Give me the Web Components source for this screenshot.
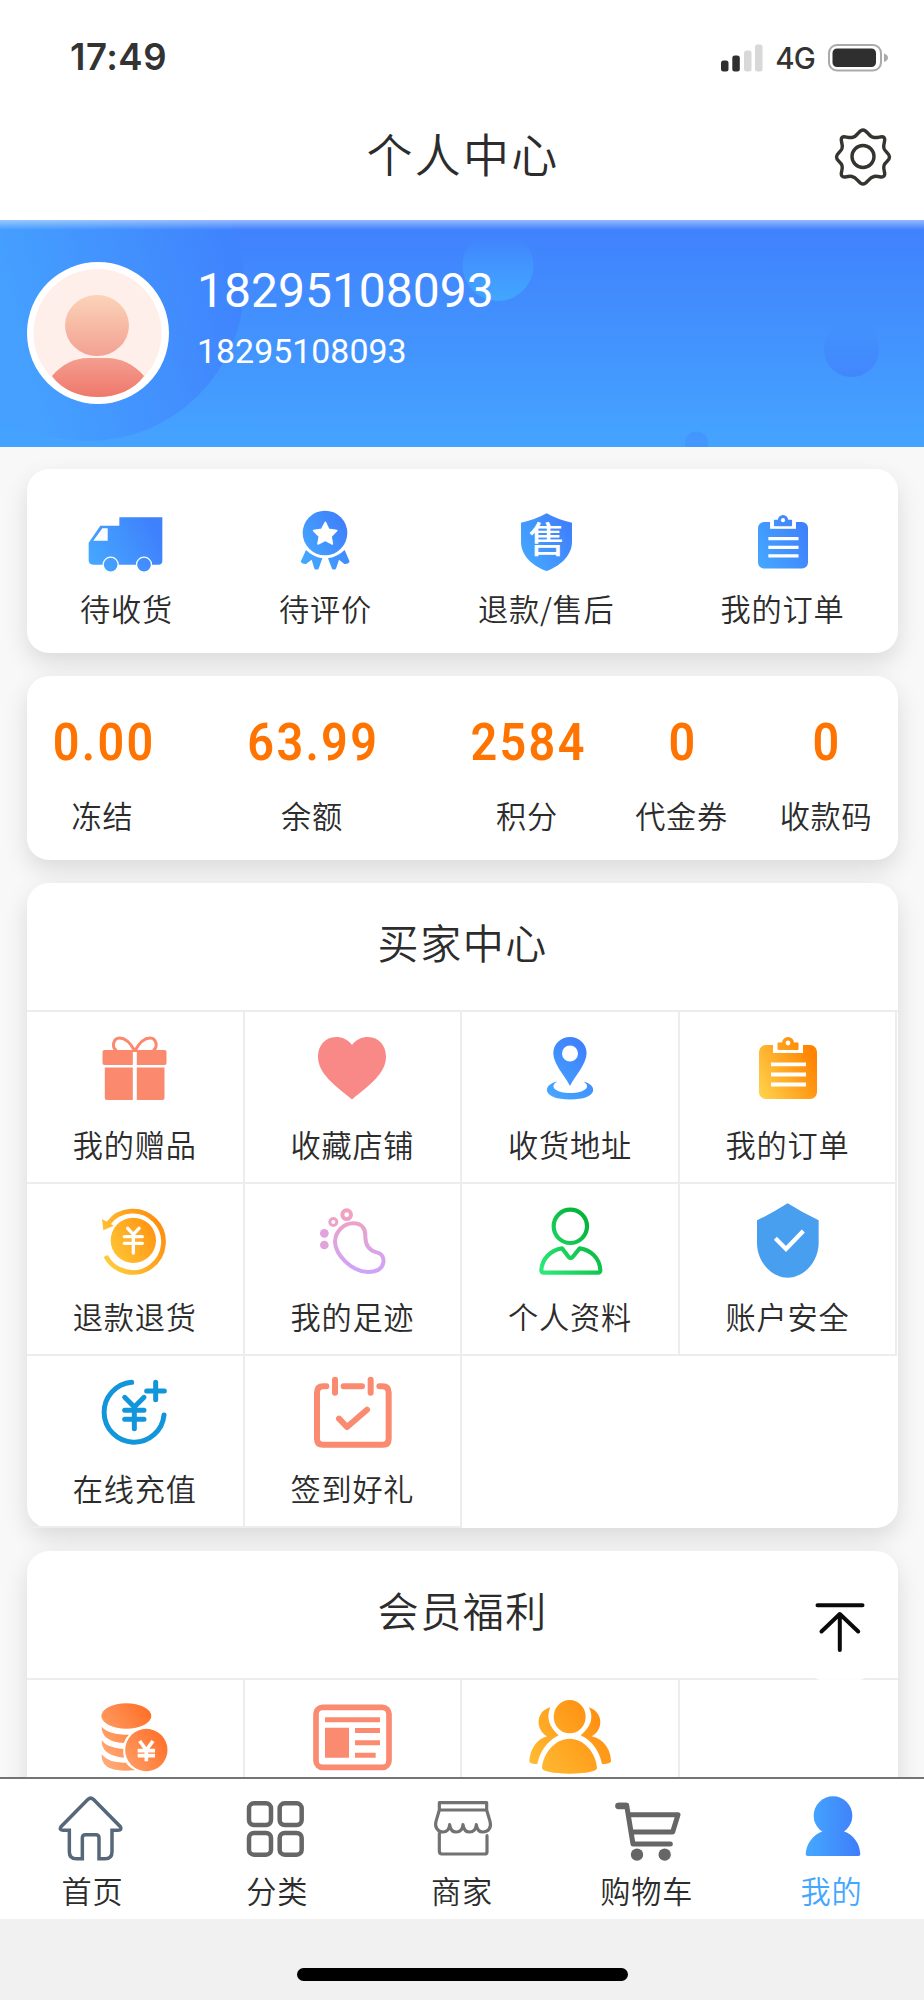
<!DOCTYPE html>
<html lang="zh-CN">
<head>
<meta charset="utf-8">
<title>个人中心</title>
<style>
html,body{margin:0;padding:0}
body{width:924px;height:2000px;overflow:hidden;background:#f8f8f8;color:#2c2c2c;font-family:"Noto Sans CJK SC",sans-serif;font-weight:350}
</style>
</head>
<body>
<profile-page></profile-page>
<script>
const define = (name, css, html) => customElements.define(name, class extends HTMLElement {
  constructor() {
    super();
    this.attachShadow({mode: 'open'});
  }
  connectedCallback() {
    const body = typeof html === 'function' ? html(this) : html;
    this.shadowRoot.innerHTML = `<style>*{box-sizing:border-box}${css}</style>${body}`;
  }
});

const ugrad = (a, b, x1, y1, x2, y2) => `<defs><linearGradient id="g" gradientUnits="userSpaceOnUse" x1="${x1}" y1="${y1}" x2="${x2}" y2="${y2}"><stop offset="0" stop-color="${a}"/><stop offset="1" stop-color="${b}"/></linearGradient></defs>`;
const board = `<g fill="url(#g)"><rect y="8" width="58" height="54" rx="7"/><rect x="14" y="4" width="30" height="12" fill="#fff"/><rect x="18.5" y="5.5" width="21" height="7.5" rx="1"/><circle cx="29" cy="6" r="6"/></g><circle cx="29" cy="6" r="2.4" fill="#fff"/><path d="M12 27.3H47M12 37.5H47M12 47.5H47" stroke="#fff" stroke-width="3.8"/>`;
const BLUE = ['#45a6ff', '#3f80fc'];

// name: [width, height, viewBox, markup]
const ICONS = {
  gear: [62, 62, '832 126 62 62', `<g fill="none" stroke="#35342f" stroke-width="3.400"><path stroke-linejoin="round" d="M863 130C867.500 130 868.500 137 874 137.500C879 138 882 135.500 884 137.500C886.500 140 882.500 143.500 884 148.500C885.500 152.500 889.500 153 889.500 157C889.500 161 885.500 161.500 884 165.500C882.500 170.500 886.500 173.500 884 176C882 178.500 879 175.500 874 176.500C868.500 177.500 867.500 184 863 184C858.500 184 857.500 177.500 852 176.500C847 175.500 844 178.500 842 176C839.500 173.500 843.500 170.500 842 165.500C840.500 161.500 836.500 161 836.500 157C836.500 153 840.500 152.500 842 148.500C843.500 143.500 839.500 140 842 137.500C844 135.500 847 138 852 137.500C857.500 137 858.500 130 863 130Z"/><circle cx="863" cy="156.500" r="11"/></g>`],
  truck: [80, 70, '48 21 240 210', ugrad(...BLUE, 70, 190, 260, 90) + `<path fill="url(#g)" d="M148 52H277V182Q277 194 265 194H70Q56 194 56 180V128L91 77H148Z"/><path fill="#fff" d="M97 85H113V122H70Z"/><g fill="url(#g)" stroke="#fff" stroke-width="4"><circle cx="122" cy="194" r="22.500"/><circle cx="222" cy="194" r="22.500"/></g>`],
  medal: [80, 70, '645 21 240 210', ugrad(...BLUE, 700, 160, 830, 80) + `<g fill="url(#g)"><circle cx="765" cy="99" r="67"/><path d="M708 150L692 185Q697 193 708 192L725 179L733 206Q740 211 746 206L757 175Q728 170 708 150ZM824 150L839 185Q834 193 823 192L807 179L798 206Q791 211 786 206L774 175Q803 170 824 150Z"/></g><path fill="#fff" stroke="#fff" stroke-width="5" stroke-linejoin="round" d="M766 67L776 88L800 92L783 109L787 132L766 121L744 132L748 109L731 92L755 88Z"/>`],
  aftersale: [80, 70, '1308 21 240 210', ugrad(...BLUE, 1360, 170, 1500, 80) + `<path fill="url(#g)" d="M1430 40Q1465 60 1506 68V125C1506 170 1465 200 1430 213C1393 200 1353 170 1353 125V68Q1394 60 1430 40Z"/><text x="1431" y="159" text-anchor="middle" fill="#fff" font-size="110" font-weight="500" font-family="Noto Sans CJK SC">售</text>`],
  order: [80, 70, '-17.4 -9.3 92.800 81.200', ugrad(...BLUE, 0, 50, 58, 20) + board],
  orderHot: [90, 80, '-16 -9 90 80', ugrad('#ffce48', '#ff8200', 0, 50, 56, 20) + board],
  gift: [90, 80, '89.5 1028 90 80', `<g fill="#fa896e"><rect x="102" y="1050" width="64" height="15" rx="2"/><path d="M104.300 1067.500H164V1098Q164 1100 162 1100H106.300Q104.300 1100 104.300 1098Z"/></g><path d="M134.300 1052V1100" stroke="#fff" stroke-width="4"/><path d="M134.300 1051C130 1043 124 1038 119 1038C113 1038 110.500 1047 116 1050.500M134.300 1051C138.600 1043 144.600 1038 149.600 1038C155.600 1038 158.100 1047 152.600 1050.500" fill="none" stroke="#fa896e" stroke-width="3"/>`],
  heart: [90, 80, '307 1028 90 80', `<path fill="#f98986" d="M352 1045C348 1039.500 342 1037 336 1037C325 1037 318 1046 318 1056.500C318 1074 335 1085 352 1099.500C369 1085 386 1074 386 1056.500C386 1046 379 1037 368 1037C362 1037 356 1039.500 352 1045Z"/>`],
  pin: [90, 80, '524.7 1028 90 80', ugrad(...BLUE, 550, 1095, 590, 1050) + `<g fill="url(#g)"><path fill-rule="evenodd" d="M569.700 1037C579 1037 586.300 1044 586.300 1053C586.300 1064 576 1074 569.700 1086C563.400 1074 553 1064 553 1053C553 1044 560.500 1037 569.700 1037ZM569.700 1045.500A8 8 0 1 0 569.700 1061.500A8 8 0 1 0 569.700 1045.500Z"/><path d="M557 1081.500C541 1085 542 1099.500 570 1099.500C598 1099.500 598 1085 583 1081.500C592 1087 584 1093 570 1093C556 1093 548 1087 557 1081.500Z"/></g>`],
  refund: [90, 80, '269 60 270 240', ugrad('#ffc838', '#ff8c0c', 320, 230, 490, 130) + `<circle cx="399" cy="181" r="68" fill="url(#g)"/><path d="M324 130A92 92 0 1 1 316 228" fill="none" stroke="url(#g)" stroke-width="14"/><path fill="url(#g)" d="M305 117L340 137L309 151Z"/><path d="M382 145L399 163L416 145M399 163V219M372 170H426M372 190H426" stroke="#fff" stroke-width="10" fill="none" stroke-linecap="round"/>`],
  foot: [90, 80, '921 60 270 240', ugrad('#f3a2bd', '#cda4fb', 0, 90, 0, 280) + `<g fill="none" stroke="url(#g)" stroke-width="12"><path d="M1060 130C1085 130 1097 145 1096 170C1096 193 1105 210 1130 217C1148 221 1152 235 1150 248C1146 270 1125 276 1103 276C1055 274 1006 225 1005 185C1006 155 1030 130 1060 130Z"/><circle cx="1040" cy="104" r="13"/><circle cx="1000" cy="126" r="10.500" stroke-width="9"/></g><g fill="#e0a3dc"><circle cx="973" cy="160" r="13"/><circle cx="973" cy="195" r="13"/></g>`],
  profile: [90, 80, '224 60 270 240', ugrad('#2be878', '#05b53c', 280, 270, 420, 150) + `<g fill="none" stroke="url(#g)" stroke-width="12.500" stroke-linejoin="round"><circle cx="360" cy="139" r="50"/><path d="M335 205C300 210 275 238 273 270Q273 278 281 278H443Q450 278 450 270C448 235 422 210 388 205L367 231Q361 237 355 231Z"/></g>`],
  safety: [90, 80, '877 60 270 240', `<path fill="#489ff0" d="M1011 70Q1055 98 1104 121V188C1104 245 1060 293 1011 293C962 293 919 245 919 188V121Q967 98 1011 70Z"/><path d="M974 175L1006 207L1058 153" stroke="#fff" stroke-width="13" fill="none"/>`],
  recharge: [90, 80, '269 576 270 240', `<g fill="none" stroke="#1296db" stroke-width="15" stroke-linecap="round"><path d="M394 607A90 90 0 1 0 491 705M439 633H492M466 607V659M373 652L402 681L431 652M402 681V746M373 691H431M373 718H431"/></g>`],
  checkin: [90, 80, '921 576 270 240', `<g fill="none" stroke="#fa8a70" stroke-width="18" stroke-linecap="round" stroke-linejoin="round"><path d="M979 619H970Q951 619 951 638V776Q951 794 969 794H1149Q1166 794 1166 776V638Q1166 619 1147 619H1138M1031 619H1086M1005 599V638M1112 599V638M1017 716L1041 741L1101 689"/></g>`],
  coins: [90, 80, '269 18 270 240', ugrad('#ffab78', '#ff7028', 310, 220, 480, 110) + `<g fill="url(#g)"><ellipse cx="378" cy="78" rx="75" ry="38"/><path d="M304 110Q325 134 386 134Q375 143 370 159Q303 154 304 110ZM304 151Q320 174 369 177Q367 190 371 203Q303 198 304 151ZM304 193Q325 220 377 218Q386 233 405 240Q300 252 304 193Z"/><circle cx="438" cy="180" r="63.500"/></g><path d="M418 153L438 180L458 153M438 180V214M412 182H464M412 197H464" fill="none" stroke="#fff" stroke-width="11"/>`],
  news: [90, 80, '921 18 270 240', `<rect x="948" y="52" width="219" height="180" rx="20" fill="none" stroke="#fa8a70" stroke-width="17"/><path fill="#fa8a70" d="M975 82H1140V97H975ZM975 113H1047V203H975ZM1065 114H1140V129H1065ZM1065 151H1140V166H1065ZM1065 188H1127V203H1065Z"/>`],
  members: [90, 80, '44 318 270 240', ugrad('#ffb830', '#ff8e10', 80, 520, 270, 370) + `<g fill="url(#g)"><ellipse cx="178" cy="380" rx="48" ry="50"/><path d="M178 446C222 446 258 490 260 535Q256 550 178 551Q100 550 95 535C98 490 134 446 178 446ZM120 352C106 385 118 412 145 436C108 455 88 488 81 522Q62 522 57 515C58 480 78 448 110 439C75 420 75 364 120 352ZM236 352C252 385 240 412 211 436C250 455 268 488 275 522Q296 522 302 515C302 480 282 448 244 439C280 420 280 368 236 352Z"/></g>`],
  home: [80, 76, '157 306 240 228', `<path fill="none" stroke="#56677a" stroke-width="10.500" d="M281 328L362 410Q368 421 355 421H337V485Q337 506 316 506H298V443Q298 434 288 434H258Q248 434 248 443V506H230Q209 506 209 485V421H190Q177 420 184 410L265 328Q273 321 281 328Z"/>`],
  grid: [80, 76, '712 306 240 228', `<g fill="none" stroke="#666" stroke-width="13.500"><rect x="748" y="340" width="66" height="65" rx="15"/><rect x="840" y="340" width="66" height="65" rx="15"/><rect x="748" y="429" width="66" height="65" rx="15"/><rect x="840" y="429" width="66" height="65" rx="15"/></g>`],
  shop: [80, 76, '1266 306 240 228', `<path fill="none" stroke="#727272" stroke-width="9.500" stroke-linejoin="round" stroke-linecap="round" d="M1318 360V338H1460V360ZM1318 360L1308 394C1303 412 1314 426 1329 426Q1347 426 1349 404Q1352 426 1369 426Q1387 426 1389 404Q1392 426 1409 426Q1427 426 1429 404Q1432 426 1449 426C1466 426 1475 412 1470 394L1460 360M1318 428V484Q1318 492 1326 492H1454Q1461 492 1461 485V437"/>`],
  cart: [80, 76, '291 606 240 228', `<path fill="none" stroke="#666" stroke-width="15" stroke-linejoin="round" stroke-linecap="round" d="M325 646H350L369 762H481M357 674H504L488 726H366"/><path d="M325 648H348" stroke="#666" stroke-width="19" stroke-linecap="round"/><g fill="#666"><circle cx="381" cy="794" r="18.500"/><circle cx="464" cy="794" r="18.500"/></g>`],
  me: [80, 76, '845 606 240 228', ugrad('#45a6ff', '#3f7ffb', 895, 0, 1040, 0) + `<g fill="url(#g)"><circle cx="968" cy="677" r="58"/><path d="M930 700H1006L1000 724C1030 734 1049 762 1050 793Q1050 798 1044 798H892Q886 798 886 793C888 762 907 734 938 724Z"/></g>`]
};

define('app-icon', ':host{display:block}svg{display:block;overflow:visible}', el => {
  const [w, h, box, body] = ICONS[el.getAttribute('name')];
  return `<svg width="${w}" height="${h}" viewBox="${box}" aria-hidden="true">${body}</svg>`;
});

define('status-bar', `:host{display:flex;height:88px;padding:0 35px 0 70px;align-items:center;justify-content:space-between;font-family:Inter,sans-serif;font-weight:600;color:#333}
.time{font-size:36.500px;letter-spacing:.5px;padding-top:25px}
.right{display:flex;align-items:center;padding-top:27px}.net{font-size:29.500px;font-weight:500;line-height:30px;letter-spacing:-.8px;margin:1px 13px 0 11px}svg{display:block}`,
`<span class="time">17:49</span><div class="right"><svg width="43" height="28" viewBox="0 0 43 28"><g fill="#2f2f2f"><rect y="16.500" width="7.500" height="11" rx="2.500"/><rect x="11.300" y="11.500" width="7.500" height="16" rx="2.500"/></g><g fill="#d8d8d8"><rect x="23" y="6.500" width="7.500" height="21" rx="2.500"/><rect x="34" y=".5" width="7.500" height="27" rx="2.500"/></g></svg><span class="net">4G</span><svg width="61" height="28" viewBox="0 0 61 28"><rect x="1" y="1" width="52" height="25.500" rx="8" fill="none" stroke="#aaa" stroke-width="2"/><rect x="4.500" y="4.500" width="43.500" height="18.500" rx="4.500" fill="#2f2f2f"/><path d="M56 9.500Q60 11 60 13.750T56 18Z" fill="#aaa"/></svg></div>`);

define('title-bar', `:host{display:grid;grid-template-columns:92px 1fr 92px;height:132px;align-items:center}
h1{margin:0;font-size:46px;font-weight:inherit;line-height:60px;letter-spacing:2.200px;text-align:center;grid-column:2;padding:0 0 4px 2px}app-icon{margin-top:6px}`,
`<h1><slot></slot></h1><app-icon name="gear"></app-icon>`);

define('user-banner', `:host{display:grid;height:227px;grid-template-areas:"a";overflow:hidden;color:#fff;font-family:Roboto,sans-serif;font-weight:400}
.bg,.fg{grid-area:a}.bg{display:block}.fg{display:flex;align-items:flex-start;padding:42px 0 0 27px;gap:28px}
.name{font-size:48px;line-height:56px;margin-top:1px}.phone{font-size:33.900px;line-height:40px;margin-top:13px}`,
`<svg class="bg" width="924" height="227" viewBox="0 220 924 227"><defs>
<linearGradient id="v" x2="0" y2="1"><stop offset="0" stop-color="#4080fd"/><stop offset="1" stop-color="#45a4ff"/></linearGradient>
<linearGradient id="c" gradientUnits="userSpaceOnUse" x1="10" y1="310" x2="225" y2="250"><stop offset="0" stop-color="#45a0ff"/><stop offset="1" stop-color="#4084fd"/></linearGradient>
<linearGradient id="b" x2="0" y2="1"><stop offset=".1" stop-color="#42a6ff" stop-opacity="0"/><stop offset="1" stop-color="#42a6ff"/></linearGradient>
<linearGradient id="d" x2="0" y2="1"><stop offset="0" stop-color="#4080fc" stop-opacity="0"/><stop offset="1" stop-color="#4082fc" stop-opacity=".8"/></linearGradient>
<linearGradient id="s" x2="0" y2="1"><stop offset="0" stop-color="#fff" stop-opacity=".45"/><stop offset="1" stop-color="#fff" stop-opacity="0"/></linearGradient></defs>
<rect y="220" width="924" height="227" fill="url(#v)"/><circle cx="88" cy="285" r="156" fill="url(#c)"/><circle cx="498" cy="265.500" r="35.500" fill="url(#b)"/><circle cx="851.500" cy="349.500" r="27.500" fill="url(#d)"/><circle cx="696.500" cy="443" r="11.500" fill="#4082fc" opacity=".35"/><rect y="220" width="924" height="10" fill="url(#s)"/></svg>
<div class="fg"><svg width="142" height="142" viewBox="27 262 142 142"><defs><linearGradient id="h" x2="0" y2="1"><stop offset="0" stop-color="#fbd3b8"/><stop offset="1" stop-color="#f3a192"/></linearGradient><linearGradient id="t" x2="0" y2="1"><stop offset="0" stop-color="#f39e8f"/><stop offset="1" stop-color="#ef786c"/></linearGradient></defs><circle cx="98" cy="333" r="71" fill="#fff"/><circle cx="97.500" cy="333" r="64" fill="#feefea"/><ellipse cx="97" cy="325.500" rx="32" ry="30.500" fill="url(#h)"/><path fill="url(#t)" d="M52 376C62 364 75 358 88 358H107C120 358 134 364 144 376C134 390 117 397 98 397S62 390 52 376Z"/></svg>
<div><div class="name">18295108093</div><div class="phone">18295108093</div></div></div>`);

define('ui-card', `:host{display:block;width:870.500px;margin:0 27px;border-radius:22px;background:#fff;box-shadow:0 10px 24px rgba(0,0,0,.12)}`, `<slot></slot>`);

define('icon-link', `:host{display:flex;flex-direction:column;align-items:center;font-size:30.200px;letter-spacing:.8px;line-height:44px;white-space:nowrap}
app-icon{margin-bottom:var(--icon-gap,9px)}`, el => `<app-icon name="${el.getAttribute('icon')}"></app-icon><span><slot></slot></span>`);

define('order-row', `:host{display:flex;justify-content:space-around;height:183.500px;padding-top:38px}`,
`<icon-link icon="truck">待收货</icon-link><icon-link icon="medal">待评价</icon-link><icon-link icon="aftersale">退款/售后</icon-link><icon-link icon="order">我的订单</icon-link>`);

define('wallet-item', `:host{display:flex;flex-direction:column;align-items:center;font-size:30.200px;letter-spacing:.7px;line-height:44px}
b{font:600 52px/60px Roboto,sans-serif;color:#ff7400;letter-spacing:2.600px;margin:0 -2.600px 20px 0;transform:scaleX(.9)}`, el => `<b>${el.getAttribute('value')}</b><span><slot></slot></span>`);

define('wallet-row', `:host{display:grid;grid-template-columns:151px 268px 162px 147px 142px;height:183.500px;padding-top:37px}`,
`<wallet-item value="0.00">冻结</wallet-item><wallet-item value="63.99">余额</wallet-item><wallet-item value="2584">积分</wallet-item><wallet-item value="0">代金券</wallet-item><wallet-item value="0">收款码</wallet-item>`);

define('menu-section', `:host{display:block}h2{margin:0;height:129px;border-bottom:2px solid #ededed;text-align:center;font-size:41px;font-weight:inherit;line-height:117px;letter-spacing:1.600px;padding-left:1px}
.grid{display:grid;grid-template-columns:repeat(4,217.600px)}`, el => `<h2>${el.getAttribute('heading')}</h2><div class="grid"><slot></slot></div>`);

define('menu-cell', `:host{display:block;height:172px;padding-top:16px;border-right:2px solid #ededed;border-bottom:2px solid #ededed;--icon-gap:14px}`,
el => `<icon-link icon="${el.getAttribute('icon')}"><slot></slot></icon-link>`);

define('back-top', `:host{position:absolute;left:784px;top:1572px;width:112px;height:112px;border-radius:56px;background:rgba(255,255,255,.85)}svg{display:block}`,
`<svg width="112" height="112" viewBox="784 1572 112 112" fill="none" stroke="#0a0a0a" stroke-width="4" stroke-linecap="round" stroke-linejoin="round"><path d="M817.500 1605.200H862.500M839.800 1614V1650M821.500 1631.500L839.800 1614L858.200 1631.500"/></svg>`);

define('tab-bar', `:host{display:grid;grid-template-columns:repeat(5,1fr);height:142px;border-top:2px solid #747474;background:#fff;padding-top:13px;--icon-gap:0px}.on{color:#45a6ff}`,
`<icon-link icon="home">首页</icon-link><icon-link icon="grid">分类</icon-link><icon-link icon="shop">商家</icon-link><icon-link icon="cart">购物车</icon-link><icon-link class="on" icon="me">我的</icon-link>`);

define('home-indicator', `:host{display:flex;justify-content:center;height:81px;padding-top:49px;background:#f1f1f1}i{width:331px;height:12.500px;border-radius:6.500px;background:#000}`, `<i></i>`);

define('profile-page', `:host{display:flex;flex-direction:column;width:924px;height:2000px;overflow:hidden;position:relative}
header{background:#fff}main{flex:1;min-height:0;overflow:hidden}.stack{display:flex;flex-direction:column;gap:23.500px;padding-top:22px}
.next{margin-top:-1px}`,
`<header><status-bar></status-bar><title-bar>个人中心</title-bar></header>
<main><user-banner></user-banner><div class="stack">
<ui-card><order-row></order-row></ui-card>
<ui-card><wallet-row></wallet-row></ui-card>
<ui-card><menu-section heading="买家中心">
<menu-cell icon="gift">我的赠品</menu-cell><menu-cell icon="heart">收藏店铺</menu-cell><menu-cell icon="pin">收货地址</menu-cell><menu-cell icon="orderHot">我的订单</menu-cell>
<menu-cell icon="refund">退款退货</menu-cell><menu-cell icon="foot">我的足迹</menu-cell><menu-cell icon="profile">个人资料</menu-cell><menu-cell icon="safety">账户安全</menu-cell>
<menu-cell icon="recharge">在线充值</menu-cell><menu-cell icon="checkin">签到好礼</menu-cell></menu-section></ui-card>
<ui-card class="next"><menu-section heading="会员福利"><menu-cell icon="coins"></menu-cell><menu-cell icon="news"></menu-cell><menu-cell icon="members"></menu-cell></menu-section></ui-card>
</div></main>
<back-top></back-top><tab-bar></tab-bar><home-indicator></home-indicator>`);
</script>
</body>
</html>
